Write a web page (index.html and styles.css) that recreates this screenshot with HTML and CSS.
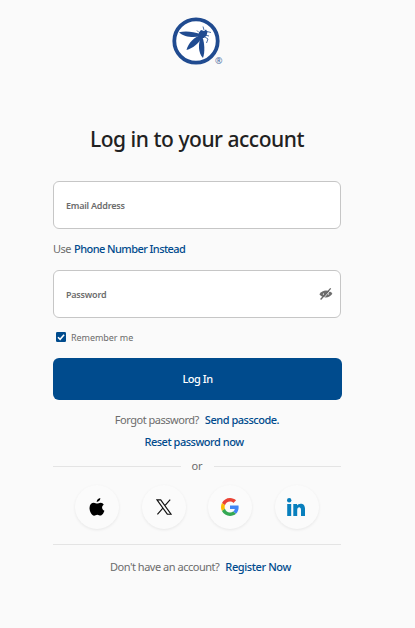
FILE: index.html
```
<!DOCTYPE html>
<html lang="en">
<head>
<meta charset="utf-8">
<title>Log in</title>
<link rel="stylesheet" href="styles.css">
</head>
<body>
<main class="login">
  <div class="logo">
    <svg class="logo-mark" viewBox="0 0 48 48" width="48" height="48">
      <circle cx="24" cy="24" r="21.700" fill="#fff" stroke="#204b90" stroke-width="3.800"/>
      <g fill="#204b90">
        <path d="M7 15.200C13 13.600 22 14.500 28 17L28 19C22 21.200 12 20 7 15.200Z"/>
        <path d="M29 18C23 19.500 16 26 14.500 33C21 31.500 27.500 25.500 30 20Z"/>
        <path d="M29 20C26 26 26 36 31 41C33.200 35 32.500 26 30.500 20Z"/>
        <path d="M26.500 16L29 13L32 14L34 12.500L35.500 15L34.500 18.500L32 21L28.500 21Z"/>
      </g>
      <path d="M32 13L31 9.500M35 14.500L39 15.500M26.500 15L25 13.500M33 20L36 22L34.500 26M33 18L37 19" fill="none" stroke="#204b90" stroke-width=".8"/>
    </svg>
    <span class="reg">®</span>
  </div>
  <h1 class="title">Log in to your account</h1>
  <form class="form">
    <div class="field"><span class="label email">Email Address</span></div>
    <p class="switch"><span class="use">Use</span><a class="link phone">Phone Number Instead</a></p>
    <div class="field"><span class="label password">Password</span>
      <svg class="eye" viewBox="0 0 14 12" width="14" height="12">
        <path d="M.4 6.200C3.500 1.500 10 1.300 13.400 5.800C10.200 10.600 3.800 10.700 .4 6.200Z" fill="#6c6c6c"/>
        <path d="M3.700 6.300Q4 5.200 4.800 4.900Q4.500 6 4.900 7.100Q4.200 6.900 3.700 6.300ZM9.400 4.900Q10.100 5.200 10.300 5.900Q10 6.700 9.200 7.100Q9.600 6.200 9.400 4.900Z" fill="#fff"/>
        <path d="M2.900 12L12.700 1" stroke="#fff" stroke-width=".8"/>
        <path d="M1.600 11.500L11.700 .4" stroke="#686868" stroke-width="1.300"/>
      </svg>
    </div>
    <div class="remember">
      <svg class="check" viewBox="0 0 10 10" width="10" height="10"><rect width="10" height="10" rx="1.300" fill="#004b8d"/><path d="M2 5.200L4.100 7.300L8.100 2.700" fill="none" stroke="#fff" stroke-width="1.500"/></svg>
      <span class="remember-text">Remember me</span>
    </div>
    <div class="button"><span>Log In</span></div>
  </form>
  <p class="row forgot"><span class="forgot-q">Forgot password?</span><a class="link send">Send passcode.</a></p>
  <p class="row reset"><a class="link reset-link">Reset password now</a></p>
  <div class="or"><span class="or-text">or</span></div>
  <div class="socials">
    <div class="social"><svg viewBox="0 0 16 20" width="16" height="20"><path d="M11.300 1C11.500 3.200 9.800 5 7.700 5C7.600 3 9.300 1.200 11.300 1ZM14.800 7.700C12.300 9.200 12.500 12.600 15.400 13.800C14.800 15.800 13.200 18.600 11.500 18.600C10.300 18.600 9.700 17.800 8.300 17.800C6.900 17.800 6.300 18.700 5.100 18.700C3 18.700 .5 14.500 .5 11C.5 7.600 2.600 5.800 4.800 5.800C6.200 5.800 7.100 6.600 8.100 6.600C9.200 6.600 10 5.700 11.800 5.700C13 5.700 14.100 6.500 14.800 7.700Z"/></svg></div>
    <div class="social"><svg viewBox="0 0 16 16" width="16" height="16"><path d="M1 .8H4.700L15 15.200H11.300ZM14.200 .6L8.900 6.700M7.100 8.900L1.400 15.400" fill="none" stroke="#111" stroke-width="1.150"/></svg></div>
    <div class="social"><svg viewBox="0 0 48 48" width="18" height="18"><path fill="#ea4335" d="M24 9.500c3.500 0 6.700 1.200 9.200 3.600l6.900-6.900C35.900 2.400 30.500 0 24 0 14.600 0 6.500 5.400 2.600 13.200l8 6.200C12.400 13.700 17.700 9.500 24 9.500z"/><path fill="#4285f4" d="M47 24.500c0-1.600-.2-3.100-.4-4.500H24v9h12.900c-.6 3-2.200 5.500-4.700 7.200l7.700 6C44.400 38 47 31.800 47 24.500z"/><path fill="#fbbc05" d="M10.500 28.600c-.5-1.500-.8-3-.8-4.600s.3-3.100.8-4.600l-8-6.200C.9 16.500 0 20.100 0 24s.9 7.500 2.600 10.800z"/><path fill="#34a853" d="M24 48c6.500 0 11.900-2.100 15.900-5.800l-7.700-6c-2.200 1.500-4.900 2.300-8.200 2.300-6.300 0-11.600-4.200-13.500-9.900l-8 6.200C6.500 42.600 14.600 48 24 48z"/></svg></div>
    <div class="social linkedin"><svg viewBox="0 0 18 18" width="18" height="18" fill="#087fbd"><circle cx="2.200" cy="2.200" r="2.200"/><rect x=".2" y="6" width="4" height="12"/><path d="M6.300 6H10V7.600C11.600 4.900 18 4.500 18 10.600V18H14V12C14 8.300 10.200 8.700 10.200 12V18H6.300Z"/></svg></div>
  </div>
  <p class="row register"><span class="account-q">Don't have an account?</span><a class="link register-link">Register Now</a></p>
</main>
</body>
</html>
```
FILE: styles.css
```
* { box-sizing: border-box; }
body {
  margin: 0;
  background: #fafafa;
  color: #6c6c6c;
  font: 11px/16px "Noto Sans", "Open Sans", sans-serif;
  letter-spacing: -.48px;
}
.login { width: 288px; margin-left: 53px; padding-top: 17px; }
.logo { position: relative; width: 48px; height: 48px; margin-left: 119px; }
.logo-mark { display: block; }
.reg { position: absolute; left: 43px; top: 36px; font-size: 9px; color: #4a6ca3; }
.title {
  margin: 59px 0 0;
  font-size: 21px;
  line-height: 30px;
  font-weight: 500;
  letter-spacing: -.47px;
  color: #212121;
  text-align: center;
  white-space: nowrap;
}
.form { margin-top: 27px; }
.field {
  display: flex;
  align-items: center;
  justify-content: space-between;
  height: 48px;
  padding: 0 8px 0 12px;
  border: 1px solid #c6c6c6;
  border-radius: 6px;
  background: #fff;
}
.label { padding-top: 2px; font-size: 9px; font-weight: 600; letter-spacing: -.22px; color: #6c6c6c; }
.eye { margin-right: -1px; }
.switch { display: flex; gap: 3px; margin: 12px 0 13px; white-space: nowrap; }
.use { letter-spacing: -.5px; }
.phone { letter-spacing: -.57px; }
.link { color: #004b8d; font-weight: 500; }
.remember { display: flex; align-items: center; gap: 5px; height: 16px; margin: 11px 0 13px 3px; }
.remember-text { padding-top: 2px; font-size: 9px; letter-spacing: -.05px; }
.button {
  display: flex;
  align-items: center;
  justify-content: center;
  width: 289px;
  height: 42px;
  border-radius: 6px;
  background: #004b8d;
  color: #fff;
  font-weight: 500;
}
.row { display: flex; justify-content: center; gap: 6px; margin: 0; white-space: nowrap; }
.forgot { margin-top: 12px; }
.reset { margin-top: 6px; padding-right: 6px; }
.register-link { letter-spacing: -.4px; }
.or { display: flex; align-items: center; gap: 11px; height: 16px; margin-top: 8px; }
.or::before, .or::after { content: ""; flex: 1; height: 1px; background: #e4e4e4; }
.or-text { display: block; width: 11px; margin-top: -1px; letter-spacing: -.2px; }
.socials { display: flex; justify-content: space-between; margin-top: 11px; padding: 0 22px 15px; border-bottom: 1px solid #e4e4e4; }
.social {
  display: flex;
  align-items: center;
  justify-content: center;
  width: 44px;
  height: 44px;
  border-radius: 50%;
  background: #fbfbfb;
  box-shadow: 0 1px 3px #00000014;
}
.linkedin { padding-right: 2px; }
.register { margin-top: 14px; padding-left: 7px; }
```
